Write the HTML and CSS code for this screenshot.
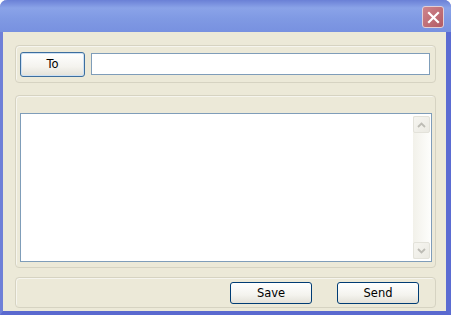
FILE: index.html
```html
<!DOCTYPE html>
<html lang="en">
<head>
    <meta charset="UTF-8">
    <title>Message</title>
    <link rel="stylesheet" href="styles.css">
</head>
<body>
    <div class="window">
        <div class="title-bar">
            <button class="close-button" aria-label="Close">
                <svg width="13" height="13" viewBox="0 0 13 13">
                    <path d="M2 2 L11 11 M11 2 L2 11" stroke="#fff" stroke-width="2.2" stroke-linecap="square"/>
                </svg>
            </button>
        </div>

        <div class="content">
            <div class="group to-group">
                <button class="xp-button to-button">To</button>
                <input type="text" class="to-input">
            </div>

            <div class="group body-group">
                <div class="text-box">
                    <div class="scrollbar">
                        <div class="scroll-btn">
                            <svg width="9" height="6" viewBox="0 0 9 6"><path d="M1 5 L4.5 1.5 L8 5" fill="none" stroke="#bdbcb5" stroke-width="1.8"/></svg>
                        </div>
                        <div class="scroll-track"></div>
                        <div class="scroll-btn">
                            <svg width="9" height="6" viewBox="0 0 9 6"><path d="M1 1 L4.5 4.5 L8 1" fill="none" stroke="#bdbcb5" stroke-width="1.8"/></svg>
                        </div>
                    </div>
                </div>
            </div>

            <div class="group action-group">
                <button class="xp-button">Save</button>
                <button class="xp-button">Send</button>
            </div>
        </div>
    </div>
</body>
</html>
```

FILE: styles.css
```css
body {
    margin: 0;
    padding: 0;
    font-family: "DejaVu Sans", Tahoma, sans-serif;
    font-size: 11px;
    background-color: #ffffff;
}

.window {
    width: 451px;
    height: 315px;
    box-sizing: border-box;
    border-left: 3px solid #6f80d8;
    border-right: 5px solid #5b6cd2;
    border-bottom: 4px solid #5a69cf;
    border-radius: 7px 7px 0 0;
    background-color: #ece9d8;
    display: flex;
    flex-direction: column;
}

.title-bar {
    height: 32px;
    margin: 0 -5px 0 -3px;
    border-radius: 7px 7px 0 0;
    background: linear-gradient(#6a80d6, #8aa3e8 25%, #7f99e3 60%, #7891e0);
    display: flex;
    justify-content: flex-end;
    align-items: flex-start;
    padding: 6px 7px 0 0;
    box-sizing: border-box;
}

.close-button {
    width: 22px;
    height: 22px;
    padding: 0;
    border: 1px solid #e2cfd6;
    border-radius: 3px;
    background: linear-gradient(135deg, #cf858d, #b25b64);
    display: flex;
    align-items: center;
    justify-content: center;
}

.content {
    flex: 1;
    padding: 13px 10px 3px 12px;
    display: flex;
    flex-direction: column;
}

.group {
    border: 1px solid #d6d3c2;
    border-radius: 4px;
    box-shadow: inset 1px 1px 0 #f6f5ee;
    box-sizing: border-box;
}

.to-group {
    height: 38px;
    display: flex;
    align-items: center;
    padding: 0 5px 0 4px;
    gap: 6px;
}

.body-group {
    height: 173px;
    margin-top: 12px;
    padding: 17px 3px 5px 4px;
}

.action-group {
    height: 31px;
    margin-top: 9px;
    display: flex;
    justify-content: flex-end;
    align-items: center;
    gap: 25px;
    padding: 0 16px 0 0;
}

.xp-button {
    width: 82px;
    height: 22px;
    padding: 0;
    border: 1px solid #003c74;
    border-radius: 3px;
    background: linear-gradient(#ffffff, #f4f3ee 60%, #e3e1d8);
    font-family: "DejaVu Sans", Tahoma, sans-serif;
    font-size: 11.5px;
    color: #000;
}

.to-button {
    width: 65px;
    height: 25px;
    border-color: #3c6e9e;
    box-shadow: inset 0 0 0 1px #cde0f3;
}

.to-input {
    flex: 1;
    height: 22px;
    box-sizing: border-box;
    border: 1px solid #7f9db9;
    margin: 0;
    background: #fff;
}

.text-box {
    height: 100%;
    box-sizing: border-box;
    border: 1px solid #7f9db9;
    background: #fff;
    display: flex;
    justify-content: flex-end;
    padding: 2px 1px 2px 0;
}

.scrollbar {
    width: 17px;
    display: flex;
    flex-direction: column;
    background: linear-gradient(90deg, #f2f1ea, #fdfdfb);
}

.scroll-btn {
    height: 17px;
    border: 1px solid #e3e2da;
    border-radius: 2px;
    background: linear-gradient(135deg, #f6f5f0, #ebeae3);
    display: flex;
    align-items: center;
    justify-content: center;
    box-sizing: border-box;
}

.scroll-track {
    flex: 1;
}
```
